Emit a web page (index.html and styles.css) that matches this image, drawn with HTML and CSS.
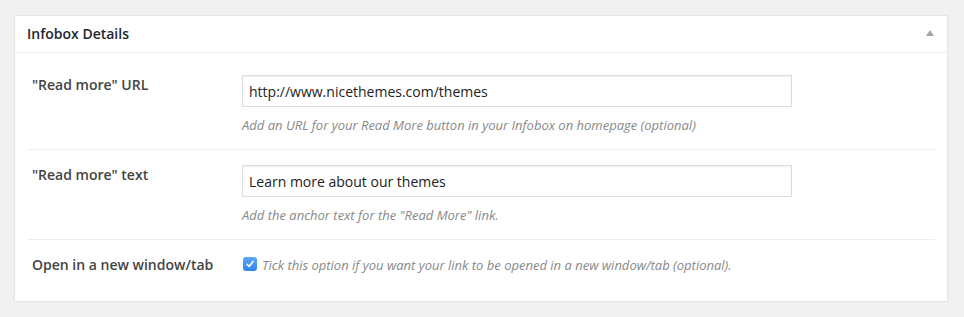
FILE: index.html
```html
<!DOCTYPE html>
<html lang="en">
<head>
    <meta charset="UTF-8">
    <meta name="viewport" content="width=device-width, initial-scale=1.0">
    <title>Infobox Details</title>
    <link rel="stylesheet" href="styles.css">
</head>
<body>
    <div class="postbox">
        <div class="postbox-header">
            <h2>Infobox Details</h2>
            <span class="toggle-indicator">
                <svg width="10" height="8" viewBox="0 0 10 8"><polygon points="5,1 9,7 1,7" fill="#a0a5aa"/></svg>
            </span>
        </div>
        <div class="inside">
            <div class="field-row">
                <label class="field-label" for="read-more-url">"Read more" URL</label>
                <div class="field-control">
                    <input type="text" id="read-more-url" value="http://www.nicethemes.com/themes">
                    <p class="description">Add an URL for your Read More button in your Infobox on homepage (optional)</p>
                </div>
            </div>
            <div class="field-row">
                <label class="field-label" for="read-more-text">"Read more" text</label>
                <div class="field-control">
                    <input type="text" id="read-more-text" value="Learn more about our themes">
                    <p class="description">Add the anchor text for the "Read More" link.</p>
                </div>
            </div>
            <div class="field-row last">
                <label class="field-label" for="new-window">Open in a new window/tab</label>
                <div class="field-control check-line">
                    <span class="checkbox">
                        <svg width="10" height="10" viewBox="0 0 10 10"><path d="M2 5.3 L4.1 7.4 L8 2.4" fill="none" stroke="#fff" stroke-width="1.6" stroke-linecap="round" stroke-linejoin="round"/></svg>
                    </span>
                    <span class="description">Tick this option if you want your link to be opened in a new window/tab (optional).</span>
                </div>
            </div>
        </div>
    </div>
</body>
</html>
```

FILE: styles.css
```css
* {
    margin: 0;
    padding: 0;
    box-sizing: border-box;
}

body {
    background: #f1f1f1;
    font-family: 'Open Sans', 'Noto Sans', sans-serif;
    font-size: 14px;
    color: #444;
    padding: 15px 16px 0 14px;
}

.postbox {
    background: #fff;
    border: 1px solid #e5e5e5;
    box-shadow: 0 1px 1px rgba(0, 0, 0, 0.04);
    width: 934px;
}

.postbox-header {
    display: flex;
    justify-content: space-between;
    align-items: center;
    height: 37px;
    padding: 0 12px;
    border-bottom: 1px solid #eee;
}

.postbox-header h2 {
    font-size: 14px;
    font-weight: 600;
    color: #23282d;
    line-height: 20px;
}

.toggle-indicator {
    display: flex;
    margin-right: 0;
    margin-top: -2px;
}

.inside {
    padding: 7px 12px 12px;
}

.field-row {
    display: flex;
    padding: 15px 0 14px;
    border-bottom: 1px solid #eee;
}

.field-row.last {
    border-bottom: none;
}

.field-label {
    width: 215px;
    padding-left: 5px;
    font-weight: 600;
    line-height: 20px;
    color: #444;
}

.field-control input {
    display: block;
    width: 550px;
    height: 32px;
    padding: 0 6px;
    border: 1px solid #ddd;
    box-shadow: inset 0 1px 2px rgba(0, 0, 0, 0.07);
    font-family: 'Open Sans', 'Noto Sans', sans-serif;
    font-size: 14px;
    color: #222;
    outline: none;
}

.description {
    font-size: 13px;
    font-style: italic;
    color: #888;
    line-height: 20px;
    margin-top: 8px;
}

.check-line {
    display: flex;
    align-items: center;
    gap: 5px;
    padding-left: 1px;
    height: 20px;
}

.check-line .description {
    margin-top: 0;
}

.checkbox {
    display: flex;
    align-items: center;
    justify-content: center;
    width: 14px;
    height: 14px;
    border-radius: 3px;
    background: linear-gradient(#5aa6f8, #2f86f0);
    margin-top: -2px;
}
```
